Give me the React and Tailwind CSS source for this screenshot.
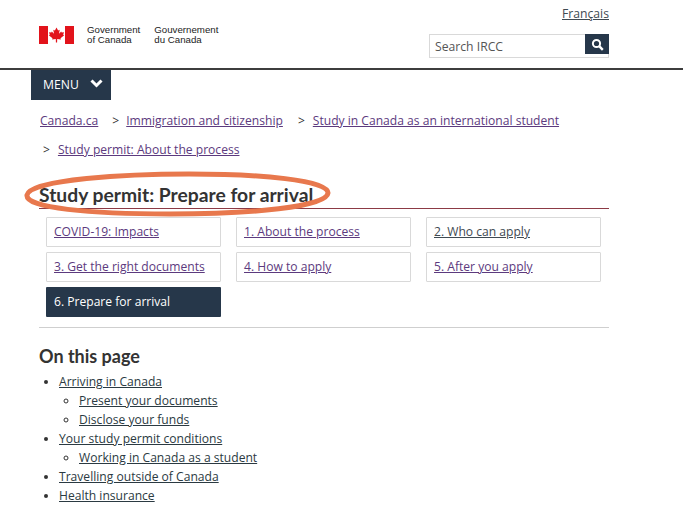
import React from 'react';

const body = "font-['Open_Sans','Noto_Sans',sans-serif]";
const heading = "font-['Lato',sans-serif]";

const tabs = [
  { label: 'COVID-19: Impacts', color: 'text-[#5c3a7e]' },
  { label: '1. About the process', color: 'text-[#5c3a7e]' },
  { label: '2. Who can apply', color: 'text-[#3f4a52]' },
  { label: '3. Get the right documents', color: 'text-[#5c3a7e]' },
  { label: '4. How to apply', color: 'text-[#5c3a7e]' },
  { label: '5. After you apply', color: 'text-[#5c3a7e]' },
];

const FlagLogo = () => (
  <svg width="35" height="18" viewBox="0 0 35 18" className="shrink-0">
    <rect x="0" y="0" width="9" height="18" fill="#e2131b" />
    <rect x="26" y="0" width="9" height="18" fill="#e2131b" />
    <path
      d="M17.5 1.5l-1.6 3-1.6-.8.7 4-2.2-2.3-.5 1.2-2.3-.4.8 2.5-1 .5 3.7 3-.4 1.3 3.7-.5.1 3.5h1.2l.1-3.5 3.7.5-.4-1.3 3.7-3-1-.5.8-2.5-2.3.4-.5-1.2-2.2 2.3.7-4-1.6.8z"
      fill="#e2131b"
    />
  </svg>
);

const Crumb = ({ children }) => (
  <a className="text-[#5c3a7e] underline">{children}</a>
);

const TocLink = ({ children }) => (
  <a className="text-[#2b3a42] underline">{children}</a>
);

export default function App() {
  return (
    <div className={`relative w-[683px] h-[512px] overflow-hidden bg-white ${body}`}>
      {/* Header */}
      <div className="h-[70px] border-b-2 border-[#3d3d3d] pl-[39px] pr-[74px] flex justify-between">
        <div className="flex items-center gap-[13px] h-[70px]">
          <FlagLogo />
          <div className="flex gap-[14px] font-['Liberation_Sans',sans-serif] text-[9.7px] leading-[10px] text-[#222]">
            <span>Government<br />of Canada</span>
            <span>Gouvernement<br />du Canada</span>
          </div>
        </div>
        <div className="flex flex-col items-end pt-[5px]">
          <a className="text-[12.2px] leading-[18px] text-[#3f4a52] underline">Français</a>
          <div className="mt-[11px] w-[180px] h-[24px] border border-[#d9d9d9] flex justify-between">
            <span className="pl-[5px] text-[12.2px] leading-[24px] text-[#555]">Search IRCC</span>
            <div className="w-[24px] h-[20px] -mt-px -mr-px bg-[#26374a] flex items-center justify-center">
              <svg width="13" height="13" viewBox="0 0 13 13" fill="none" stroke="white">
                <circle cx="5.5" cy="5.5" r="3.6" strokeWidth="2" />
                <path d="M8.2 8.2l3.6 3.6" strokeWidth="2.4" />
              </svg>
            </div>
          </div>
        </div>
      </div>

      {/* Menu */}
      <div className="ml-[31px] w-[80px] h-[30px] bg-[#26374a] flex items-center pl-[12px] gap-[11px] text-[12.2px] text-white">
        <span>MENU</span>
        <svg width="13" height="9" viewBox="0 0 13 9" fill="none" stroke="white" strokeWidth="3" className="-mt-[3px]">
          <path d="M1.5 1.5l5 5 5-5" />
        </svg>
      </div>

      {/* Breadcrumb */}
      <div className="pl-[40px] pt-[12px] text-[12.1px] leading-[18px]">
        <div className="flex text-[#333]">
          <Crumb>Canada.ca</Crumb>
          <span className="ml-[14px] mr-[7px]">&gt;</span>
          <Crumb>Immigration and citizenship</Crumb>
          <span className="ml-[15px] mr-[8px]">&gt;</span>
          <Crumb>Study in Canada as an international student</Crumb>
        </div>
        <div className="flex mt-[11px] pl-[3px] text-[#333]">
          <span className="mr-[8px]">&gt;</span>
          <Crumb>Study permit: About the process</Crumb>
        </div>
      </div>

      {/* Title */}
      <div className="mx-[39px] w-[570px] mt-[21px] h-[29px] border-b border-[#8c3a45]">
        <h1 className={`${heading} font-bold text-[19.3px] leading-[30px] text-[#333]`}>
          Study permit: Prepare for arrival
        </h1>
      </div>

      {/* Step tabs */}
      <div className="ml-[46px] mt-[8px] w-[555px] grid grid-cols-[175px_175px_175px] gap-x-[15px] gap-y-[5px]">
        {tabs.map((tab) => (
          <a
            key={tab.label}
            className={`h-[30px] border border-[#d9d9d9] rounded-[1px] pl-[7px] text-[12.1px] leading-[28px] underline ${tab.color}`}
          >
            {tab.label}
          </a>
        ))}
        <a className="h-[30px] bg-[#26374a] rounded-[1px] pl-[8px] text-[12.1px] leading-[29px] text-white">
          6. Prepare for arrival
        </a>
      </div>

      <div className="mx-[39px] w-[570px] mt-[10px] border-t border-[#cfcfcf]" />

      {/* On this page */}
      <div className="pl-[39px] pt-[16px]">
        <h2 className={`${heading} font-bold text-[18px] leading-[24px] text-[#333]`}>On this page</h2>
        <ul className="mt-[4px] pl-[20px] list-disc text-[12.1px] leading-[19px] text-[#333]">
          <li><TocLink>Arriving in Canada</TocLink>
            <ul className="pl-[20px] list-[circle]">
              <li><TocLink>Present your documents</TocLink></li>
              <li><TocLink>Disclose your funds</TocLink></li>
            </ul>
          </li>
          <li><TocLink>Your study permit conditions</TocLink>
            <ul className="pl-[20px] list-[circle]">
              <li><TocLink>Working in Canada as a student</TocLink></li>
            </ul>
          </li>
          <li><TocLink>Travelling outside of Canada</TocLink></li>
          <li><TocLink>Health insurance</TocLink></li>
        </ul>
      </div>

      {/* Hand-drawn highlight around the title */}
      <svg className="absolute left-[24px] top-[170px]" width="310" height="50" viewBox="0 0 310 50" fill="none">
        <path
          d="M3 25C6 9 105 4 165 4C235 4 305 10 304 23C303 37 226 44 146 44C66 44 1 38 3 25Z"
          stroke="#e8784d"
          strokeWidth="5"
        />
      </svg>
    </div>
  );
}
